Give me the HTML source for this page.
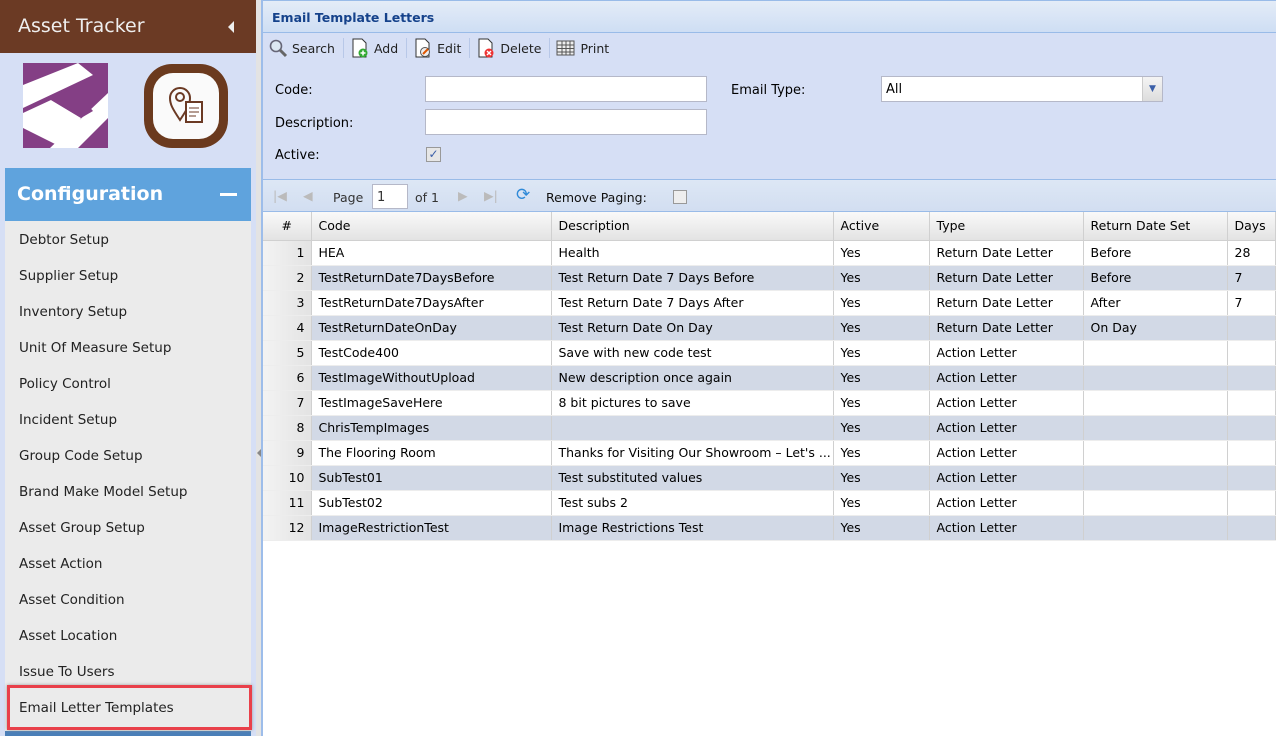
<!DOCTYPE html>
<html><head><meta charset="utf-8"><style>
*{box-sizing:border-box;margin:0;padding:0}
body{width:1276px;height:736px;overflow:hidden;font-family:"DejaVu Sans","Liberation Sans",sans-serif;font-size:12px;color:#000;background:#fff;position:relative}
#side{position:absolute;left:0;top:0;width:256px;height:736px;background:#d6dff5}
#title{height:53px;background:#6b3a24;color:#eee;padding:15px 0 0 18px;position:relative;font-family:"DejaVu Sans",sans-serif;font-size:19px}
#title:after{content:"";position:absolute;right:22px;top:21px;border-right:6px solid #eee;border-top:6px solid transparent;border-bottom:6px solid transparent}
#cfg{position:absolute;left:5px;top:168px;width:246px;height:53px;background:#5fa3dd;color:#fff;font-weight:bold;font-size:19px;padding:15px 0 0 12px}
#cfg:after{content:"";position:absolute;right:14px;top:25px;width:17px;height:3px;background:#fff}
#nav{position:absolute;left:5px;top:221px;width:246px;height:515px;background:#ebebeb}
#nav div{height:36px;padding:11px 0 0 14px;color:#222;font-size:13.5px}
#hl{position:absolute;left:7px;top:685px;width:245px;height:45px;border:3px solid #e9404a;box-shadow:0 0 3px #999}
#split{position:absolute;left:256px;top:0;width:7px;height:736px;background:#e3e3e3;border-right:2px solid #9dbdea}
#main{position:absolute;left:263px;top:0;width:1013px;height:736px}
#ph{height:33px;background:linear-gradient(#e4ecf7,#cedef4);border-bottom:1px solid #99bbe8;color:#15428b;font-weight:bold;font-size:12.5px;padding:9px 0 0 9px;border-top:1px solid #99bbe8}
#tb{height:30px;background:#d6dff5;display:flex;align-items:center;padding-left:5px;font-size:12.5px;color:#222}
#tb span{display:flex;align-items:center;gap:4px;padding:0 8px 0 0;margin-right:6px;border-right:1px solid #b8c8e8}
#tb span:last-child{border:none}
#form{height:117px;background:#d6dff5;position:relative;font-size:13px;border-bottom:1px solid #99bbe8}
#form label{position:absolute;left:12px}
.inp{position:absolute;background:#fff;border:1px solid #b5b8c8;height:26px}
#pg{height:32px;background:linear-gradient(#dde7f5,#d2def1);border-bottom:1px solid #99bbe8;position:relative;font-size:12.5px;color:#333}
table{border-collapse:collapse;width:1013px;table-layout:fixed;font-size:12.5px}
th{height:28px;background:linear-gradient(#f9f9f9,#e3e3e3);font-weight:normal;text-align:left;padding-left:7px;border-right:1px solid #d0d0d0;border-bottom:1px solid #d0d0d0}
td{height:25px;padding-left:7px;border-right:1px solid #d0d0d0;border-bottom:1px solid #ededed;white-space:nowrap;overflow:hidden}
td.n{text-align:right;padding-right:6px;background:linear-gradient(90deg,#f3f3f3,#e3e3e3)}
tr.a td{background:#d2d9e6}
tr.a td.n{background:linear-gradient(90deg,#f3f3f3,#e3e3e3)}
</style></head><body>
<div id="side">
<div id="title">Asset Tracker</div>
<svg style="position:absolute;left:23px;top:63px" width="85" height="85"><rect width="85" height="85" fill="#843f85"/><path d="M0 22 L55 0 L70 12 L0 45Z" fill="#fff"/><path d="M27 85 L85 30 L85 55 L55 85Z" fill="#fff"/><path d="M28 37 L58 55 L40 85 L0 65 L0 50Z" fill="#fff"/><path d="M28 37 L50 25 L70 48 L58 55Z" fill="#843f85"/></svg>
<svg style="position:absolute;left:142px;top:62px" width="88" height="88"><rect x="2" y="2" width="84" height="84" rx="28" fill="#6b3a1e"/><rect x="11" y="11" width="66" height="66" rx="20" fill="#fafafa"/><path d="M38 58 C30 46 28 42 28 36 a10 10 0 0 1 20 0 c0 6 -2 10 -10 22z" fill="none" stroke="#6b3a24" stroke-width="2"/><circle cx="38" cy="35" r="4" fill="none" stroke="#6b3a24" stroke-width="2"/><rect x="44" y="40" width="16" height="20" fill="#fff" stroke="#6b3a24" stroke-width="2"/><path d="M47 46h10M47 50h10M47 54h7" stroke="#6b3a24"/></svg>
<div id="cfg">Configuration</div>
<div id="nav">
<div>Debtor Setup</div><div>Supplier Setup</div><div>Inventory Setup</div><div>Unit Of Measure Setup</div><div>Policy Control</div><div>Incident Setup</div><div>Group Code Setup</div><div>Brand Make Model Setup</div><div>Asset Group Setup</div><div>Asset Action</div><div>Asset Condition</div><div>Asset Location</div><div>Issue To Users</div><div>Email Letter Templates</div>
</div>
<div style="position:absolute;left:5px;top:731px;width:246px;height:5px;background:#4a7fb8"></div>
<div id="hl"></div>
</div>
<div id="split"><div style="position:absolute;left:1px;top:449px;border-right:4px solid #888;border-top:4px solid transparent;border-bottom:4px solid transparent"></div></div>
<div id="main">
<div id="ph">Email Template Letters</div>
<div id="tb">
<span><svg width="20" height="20"><circle cx="8" cy="8" r="5.5" fill="#dde8f2" stroke="#667" stroke-width="1.6"/><path d="M12 12l6 6" stroke="#666" stroke-width="3"/></svg>Search</span>
<span><svg width="20" height="20"><path d="M3 1h9l4 4v14H3z" fill="#fff" stroke="#333"/><circle cx="13" cy="15" r="4.5" fill="#3a3"/><path d="M10.5 15h5M13 12.5v5" stroke="#fff" stroke-width="1.5"/></svg>Add</span>
<span><svg width="20" height="20"><path d="M3 1h9l4 4v14H3z" fill="#fff" stroke="#333"/><circle cx="12" cy="14" r="4.5" fill="#eee" stroke="#555"/><path d="M10 16l5-5" stroke="#d50" stroke-width="2"/></svg>Edit</span>
<span><svg width="20" height="20"><path d="M3 1h9l4 4v14H3z" fill="#fff" stroke="#333"/><circle cx="13" cy="15" r="4.5" fill="#e33"/><path d="M11 13l4 4M15 13l-4 4" stroke="#fff" stroke-width="1.4"/></svg>Delete</span>
<span><svg width="20" height="20"><rect x="1" y="3" width="17" height="14" fill="#eee" stroke="#555"/><path d="M1 7h17M1 10.5h17M1 14h17M6 3v14M10 3v14M14 3v14" stroke="#555"/></svg>Print</span>
</div>
<div id="form">
<label style="top:20px">Code:</label><div class="inp" style="left:162px;top:13px;width:282px"></div>
<label style="top:53px">Description:</label><div class="inp" style="left:162px;top:46px;width:282px"></div>
<label style="top:85px">Active:</label><div style="position:absolute;left:163px;top:84px;width:15px;height:15px;border:1px solid #999;background:#e6e6e6;color:#3b5fa8;font-size:12px;line-height:13px;text-align:center">✓</div>
<label style="left:468px;top:20px">Email Type:</label>
<div class="inp" style="left:618px;top:13px;width:282px;font-size:13px;padding:5px 0 0 4px">All<div style="position:absolute;right:0;top:0;width:20px;height:24px;background:linear-gradient(#f4f4f4,#ddd);border-left:1px solid #ccc;color:#3b5fa8;font-size:9px;text-align:center;line-height:24px">▼</div></div>
</div>
<div id="pg">
<span style="position:absolute;left:10px;top:8px;color:#bbb">|◀</span>
<span style="position:absolute;left:40px;top:8px;color:#bbb">◀</span>
<span style="position:absolute;left:70px;top:10px">Page</span>
<div class="inp" style="left:109px;top:4px;width:36px;height:25px;font-size:13px;padding:5px 0 0 4px">1</div>
<span style="position:absolute;left:152px;top:10px">of 1</span>
<span style="position:absolute;left:195px;top:8px;color:#bbb">▶</span>
<span style="position:absolute;left:221px;top:8px;color:#bbb">▶|</span>
<span style="position:absolute;left:253px;top:5px;color:#2f8ad8;font-size:17px">⟳</span>
<span style="position:absolute;left:283px;top:10px;color:#111">Remove Paging:</span>
<div style="position:absolute;left:410px;top:10px;width:14px;height:14px;border:1px solid #999;background:#eee"></div>
</div>
<table>
<colgroup><col style="width:48px"><col style="width:240px"><col style="width:282px"><col style="width:96px"><col style="width:154px"><col style="width:144px"><col></colgroup>
<tr><th style="text-align:center;padding:0">#</th><th>Code</th><th>Description</th><th>Active</th><th>Type</th><th>Return Date Set</th><th>Days</th></tr>
<tr><td class="n">1</td><td>HEA</td><td>Health</td><td>Yes</td><td>Return Date Letter</td><td>Before</td><td>28</td></tr>
<tr class="a"><td class="n">2</td><td>TestReturnDate7DaysBefore</td><td>Test Return Date 7 Days Before</td><td>Yes</td><td>Return Date Letter</td><td>Before</td><td>7</td></tr>
<tr><td class="n">3</td><td>TestReturnDate7DaysAfter</td><td>Test Return Date 7 Days After</td><td>Yes</td><td>Return Date Letter</td><td>After</td><td>7</td></tr>
<tr class="a"><td class="n">4</td><td>TestReturnDateOnDay</td><td>Test Return Date On Day</td><td>Yes</td><td>Return Date Letter</td><td>On Day</td><td></td></tr>
<tr><td class="n">5</td><td>TestCode400</td><td>Save with new code test</td><td>Yes</td><td>Action Letter</td><td></td><td></td></tr>
<tr class="a"><td class="n">6</td><td>TestImageWithoutUpload</td><td>New description once again</td><td>Yes</td><td>Action Letter</td><td></td><td></td></tr>
<tr><td class="n">7</td><td>TestImageSaveHere</td><td>8 bit pictures to save</td><td>Yes</td><td>Action Letter</td><td></td><td></td></tr>
<tr class="a"><td class="n">8</td><td>ChrisTempImages</td><td></td><td>Yes</td><td>Action Letter</td><td></td><td></td></tr>
<tr><td class="n">9</td><td>The Flooring Room</td><td>Thanks for Visiting Our Showroom – Let's ...</td><td>Yes</td><td>Action Letter</td><td></td><td></td></tr>
<tr class="a"><td class="n">10</td><td>SubTest01</td><td>Test substituted values</td><td>Yes</td><td>Action Letter</td><td></td><td></td></tr>
<tr><td class="n">11</td><td>SubTest02</td><td>Test subs 2</td><td>Yes</td><td>Action Letter</td><td></td><td></td></tr>
<tr class="a"><td class="n">12</td><td>ImageRestrictionTest</td><td>Image Restrictions Test</td><td>Yes</td><td>Action Letter</td><td></td><td></td></tr>
</table>
</div>
</body></html>
